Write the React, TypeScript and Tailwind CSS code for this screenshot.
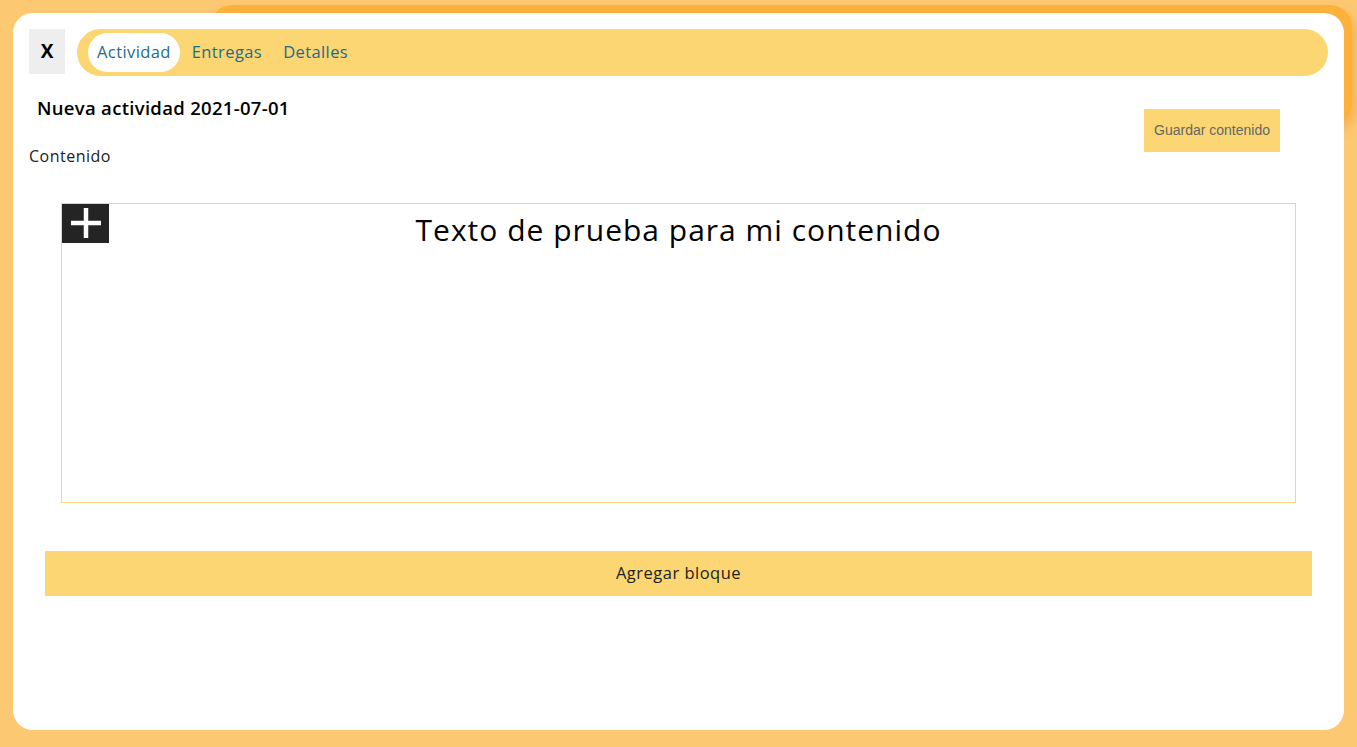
import { useState } from "react";

const TABS = ["Actividad", "Entregas", "Detalles"];

export default function App() {
  const [tab, setTab] = useState("Actividad");

  return (
    <div
      className="relative min-h-[747px] w-full overflow-hidden bg-[#fdc872] p-[13px]"
      style={{ fontFamily: '"Open Sans", "Noto Sans", sans-serif' }}
    >
      {/* stacked card peeking behind the modal */}
      <div className="absolute left-[210px] right-[5px] top-[5px] h-[120px] rounded-[22px] bg-[#fdb13b] shadow-[4px_6px_10px_rgba(240,160,60,0.5)]" />

      <div className="relative flex h-[717px] flex-col rounded-[20px] bg-white px-4 pt-4">
        <div className="flex items-start gap-3">
          <button className="flex h-[45px] w-[36px] items-center justify-center bg-[#eeeeee] text-[19px] font-bold text-black">
            X
          </button>
          <div className="flex h-[47px] flex-1 items-center gap-[3px] rounded-[24px] bg-[#fbd672] px-[11px]">
            {TABS.map((t) => (
              <button
                key={t}
                onClick={() => setTab(t)}
                className={`flex h-[39px] items-center rounded-[20px] px-[9px] text-[16.5px] tracking-[0.4px] text-[#1b6d8a] ${
                  t === tab ? "bg-white" : ""
                }`}
              >
                {t}
              </button>
            ))}
          </div>
        </div>

        <div className="flex items-start justify-between">
          <div>
            <h2 className="ml-2 mt-[18px] text-[18.5px] font-semibold tracking-[0.3px] text-black">
              Nueva actividad 2021-07-01
            </h2>
            <p className="mt-[22px] text-[16px] tracking-[0.5px] text-[#222]">Contenido</p>
          </div>
          <button
            className="mr-[48px] mt-[33px] h-[43px] bg-[#fbd672] px-[10px] text-[14px] text-[#666]"
            style={{ fontFamily: '"Liberation Sans", Arial, sans-serif' }}
          >
            Guardar contenido
          </button>
        </div>

        <div className="mx-[32px] mt-[35px] h-[300px] border border-[#f9d47a]">
          <div className="flex">
            <button className="flex h-[39px] w-[47px] shrink-0 items-center justify-center bg-[#242424]">
              <svg width="32" height="32" viewBox="0 0 32 32">
                <path d="M16 1v30M1 16h30" stroke="white" strokeWidth="4.5" />
              </svg>
            </button>
            <p className="flex-1 pr-[47px] pt-[3px] text-center text-[30px] tracking-[1px] text-black">
              Texto de prueba para mi contenido
            </p>
          </div>
        </div>

        <button className="mx-4 mt-[48px] h-[45px] bg-[#fbd672] text-[16.5px] tracking-[0.5px] text-[#222]">
          Agregar bloque
        </button>
      </div>
    </div>
  );
}
